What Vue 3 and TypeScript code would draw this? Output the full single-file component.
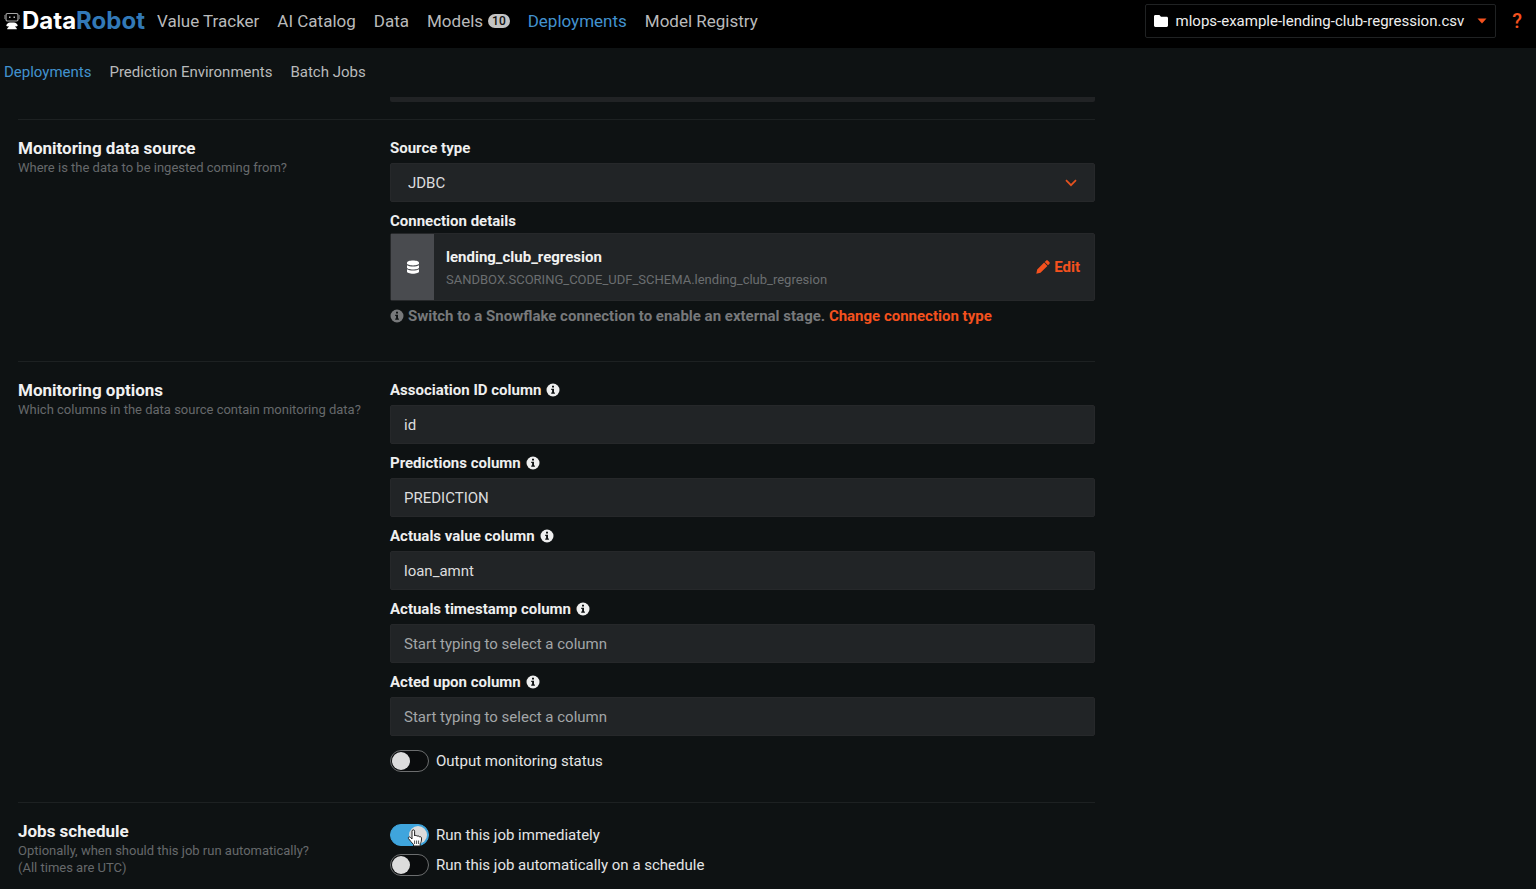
<script setup lang="ts">
import { ref, reactive } from 'vue'

interface NavItem {
  label: string
  active?: boolean
  badge?: number
}

interface ColumnField {
  id: string
  label: string
  value: string
}

const mainNav: NavItem[] = [
  { label: 'Value Tracker' },
  { label: 'AI Catalog' },
  { label: 'Data' },
  { label: 'Models', badge: 10 },
  { label: 'Deployments', active: true },
  { label: 'Model Registry' },
]

const subNav: NavItem[] = [
  { label: 'Deployments', active: true },
  { label: 'Prediction Environments' },
  { label: 'Batch Jobs' },
]

const sourceType = ref('JDBC')

const columns = reactive<ColumnField[]>([
  { id: 'association', label: 'Association ID column', value: 'id' },
  { id: 'predictions', label: 'Predictions column', value: 'PREDICTION' },
  { id: 'actuals', label: 'Actuals value column', value: 'loan_amnt' },
  { id: 'timestamp', label: 'Actuals timestamp column', value: '' },
  { id: 'acted', label: 'Acted upon column', value: '' },
])

const outputStatus = ref(false)
const runNow = ref(true)
const runScheduled = ref(false)
</script>

<template>
  <div class="app">
    <header class="topbar">
      <a class="brand" href="#">
        <svg class="brand-icon" viewBox="0 0 16 18" aria-hidden="true">
          <rect x="2" y="1.500" width="12" height="7.500" rx="1.500" fill="none" stroke="#a8a8a8" stroke-width="1.200" />
          <path d="M.8 3v4M15.200 3v4" stroke="#777" stroke-width="1" />
          <path d="M5 4.500h1.500V6H5zM9.500 4.500H11V6H9.500z" fill="#b8b8b8" />
          <path d="M6 10.500h4c1.800.2 3.400 1.400 3.800 3l-1 1-1.300-.5v1l1.300 1.500v.8H3.200v-.8L4.500 15v-1l-1.300.5-1-1c.4-1.600 2-2.800 3.800-3z" fill="#fff" />
        </svg>
        <span class="brand-name">Data<span class="brand-accent">Robot</span></span>
      </a>
      <nav class="main-nav" aria-label="Main">
        <a v-for="item in mainNav" :key="item.label" href="#" :class="{ active: item.active }">
          {{ item.label }}<span v-if="item.badge" class="badge">{{ item.badge }}</span>
        </a>
      </nav>
      <button class="project" type="button">
        <svg class="folder" viewBox="0 0 14 12" aria-hidden="true">
          <path d="M1.400 0h4l1.600 1.700h5.600c.8 0 1.400.6 1.400 1.400v7.500c0 .8-.6 1.400-1.400 1.400H1.400C.6 12 0 11.400 0 10.600V1.400C0 .6.6 0 1.400 0z" fill="#fff" />
        </svg>
        <span class="project-name">mlops-example-lending-club-regression.csv</span>
        <svg class="caret" viewBox="0 0 10 6" aria-hidden="true"><path d="M.5.500h9L5 5.500z" fill="#f4511e" /></svg>
      </button>
      <button class="help" type="button" aria-label="Help">?</button>
    </header>

    <nav class="sub-nav" aria-label="Deployments">
      <a v-for="item in subNav" :key="item.label" href="#" :class="{ active: item.active }">{{ item.label }}</a>
    </nav>

    <main class="content">
      <div class="scrolled-field"></div>

      <section class="section source">
        <div class="intro">
          <h2>Monitoring data source</h2>
          <p>Where is the data to be ingested coming from?</p>
        </div>
        <div class="body">
          <label class="label" for="source-type">Source type</label>
          <div class="select-wrap">
            <select id="source-type" v-model="sourceType" class="control select">
              <option>JDBC</option>
            </select>
            <svg class="chevron" viewBox="0 0 12 8" aria-hidden="true">
              <path d="M1 1.200l5 5 5-5" fill="none" stroke="#e5521f" stroke-width="1.700" />
            </svg>
          </div>
          <h3 class="label">Connection details</h3>
          <div class="connection">
            <div class="connection-icon">
              <svg viewBox="0 0 14 14" aria-hidden="true">
                <path d="M1 2.600C1 1.300 3.700.400 7 .400s6 .9 6 2.200v1C13 4.700 10.300 5.500 7 5.500S1 4.700 1 3.600z" fill="#fff" />
                <path d="M1 5.300c1.300.9 3.500 1.200 6 1.200s4.700-.3 6-1.200v2.200c0 1.200-2.700 2-6 2s-6-.8-6-2z" fill="#fff" />
                <path d="M1 9.300c1.300.9 3.500 1.200 6 1.200s4.700-.3 6-1.200v2.200c0 1.300-2.700 2.200-6 2.200s-6-.9-6-2.200z" fill="#fff" />
              </svg>
            </div>
            <div class="connection-text">
              <strong>lending_club_regresion</strong>
              <span>SANDBOX.SCORING_CODE_UDF_SCHEMA.lending_club_regresion</span>
            </div>
            <button class="edit" type="button">
              <svg viewBox="0 0 14 14" aria-hidden="true">
                <path d="M.3 13.700l.9-4.200 6.900-6.900 3.300 3.300-6.900 6.900zM8.700 2l1.300-1.300c.6-.6 1.400-.6 2 0l1.300 1.300c.6.6.6 1.400 0 2L12 5.300z" fill="#f4511e" />
              </svg>
              Edit
            </button>
          </div>
          <p class="hint">
            <svg class="info" viewBox="0 0 14 14" aria-hidden="true">
              <circle cx="7" cy="7" r="6.500" fill="currentColor" />
              <path d="M6 2.800h2v1.800H6zM5.200 5.700H8v3.800h.9v1.300H5.200V9.500h.9V7h-.9z" fill="#0e1213" />
            </svg>
            <span>Switch to a Snowflake connection to enable an external stage. <a href="#">Change connection type</a></span>
          </p>
        </div>
      </section>

      <section class="section options">
        <div class="intro">
          <h2>Monitoring options</h2>
          <p>Which columns in the data source contain monitoring data?</p>
        </div>
        <div class="body">
          <div v-for="field in columns" :key="field.id" class="field">
            <label class="label" :for="field.id">
              {{ field.label }}
              <svg class="info" viewBox="0 0 14 14" aria-hidden="true">
                <circle cx="7" cy="7" r="6.500" fill="currentColor" />
                <path d="M6 2.800h2v1.800H6zM5.200 5.700H8v3.800h.9v1.300H5.200V9.500h.9V7h-.9z" fill="#0e1213" />
              </svg>
            </label>
            <input :id="field.id" v-model="field.value" class="control" type="text" placeholder="Start typing to select a column" />
          </div>
          <label class="toggle">
            <input v-model="outputStatus" type="checkbox" />
            Output monitoring status
          </label>
        </div>
      </section>

      <section class="section schedule">
        <div class="intro">
          <h2>Jobs schedule</h2>
          <p>Optionally, when should this job run automatically?<br />(All times are UTC)</p>
        </div>
        <div class="body">
          <label class="toggle">
            <input v-model="runNow" type="checkbox" />
            Run this job immediately
            <svg class="pointer" viewBox="0 0 16 18" aria-hidden="true">
              <path d="M5 10V2.200C5 .3 7.600.3 7.600 2.200V7c.4-1 2.300-.8 2.400.3.600-.8 2.200-.5 2.300.6.800-.6 2.200-.1 2.200 1.200 0 3-.3 4-1.300 5.600V17H6.500v-1.500C4.500 13.500 3 11.500 1.500 9.600.7 8.300 2.300 7.300 3.400 8.400z" fill="#fff" stroke="#222" stroke-width="1" stroke-linejoin="round" />
              <path d="M7.600 11.500v3.500M9.600 11.500v3.500M11.600 11.500v3.500" stroke="#222" stroke-width=".8" />
            </svg>
          </label>
          <label class="toggle">
            <input v-model="runScheduled" type="checkbox" />
            Run this job automatically on a schedule
          </label>
        </div>
      </section>
    </main>
  </div>
</template>

<style>
body {
  margin: 0;
  background: #0e1213;
}
</style>

<style scoped>
.app {
  height: 100vh;
  display: flex;
  flex-direction: column;
  overflow: hidden;
  background: #0e1213;
  color: #e4e5e6;
  font: 15px/22px Roboto, "Liberation Sans", sans-serif;
}
.app * {
  box-sizing: border-box;
}
a {
  color: inherit;
  text-decoration: none;
}
button {
  margin: 0;
  border: 0;
  background: none;
  font: inherit;
  cursor: pointer;
}
svg {
  display: block;
  flex: none;
}
.topbar {
  flex: none;
  display: flex;
  align-items: center;
  height: 48px;
  padding: 0 12px 6px 4px;
  background: #000;
}
.brand {
  display: flex;
  align-items: center;
  gap: 2px;
  margin-right: 12px;
  color: #fff;
}
.brand-icon {
  width: 16px;
  height: 18px;
}
.brand-name {
  font: 700 24px/24px Inter, sans-serif;
}
.brand-accent {
  color: #3279b7;
}
.main-nav {
  display: flex;
  gap: 18px;
  margin-right: auto;
  color: #b9babb;
  font-size: 17px;
}
.main-nav a {
  display: flex;
  align-items: center;
}
.main-nav .active,
.sub-nav .active {
  color: #4292cf;
}
.badge {
  margin-left: 5px;
  padding: 0 4px;
  border-radius: 7px;
  background: #c4c4c4;
  color: #111;
  font-size: 12px;
  font-weight: 500;
  line-height: 14px;
}
.project {
  display: flex;
  align-items: center;
  height: 34px;
  padding: 0 8px;
  border: 1px solid #202223;
  border-radius: 2px;
  color: #eee;
}
.folder {
  width: 14px;
  height: 12px;
  margin-right: 8px;
}
.caret {
  width: 10px;
  height: 6px;
  margin-left: 13px;
}
.help {
  padding: 0;
  margin-left: 16px;
  margin-right: 2px;
  color: #f4511e;
  font-size: 20px;
  font-weight: 500;
}
.sub-nav {
  flex: none;
  display: flex;
  align-items: center;
  gap: 18px;
  height: 49px;
  padding: 0 4px 2px;
  color: #b9babb;
}
.content {
  flex: 1;
  min-height: 0;
  overflow: hidden;
  max-width: 1095px;
  padding-left: 18px;
}
.scrolled-field {
  height: 5px;
  margin: 0 0 17px 372px;
  border-radius: 0 0 2px 2px;
  background: #212325;
}
.section {
  display: grid;
  grid-template-columns: 372px minmax(0, 1fr);
  padding-top: 17px;
  border-top: 1px solid #1d2122;
}
.source {
  padding-bottom: 34px;
}
.options {
  padding-bottom: 30px;
}
h2 {
  margin: 0;
  color: #f1f1f1;
  font-size: 17px;
  font-weight: 700;
  line-height: 22px;
}
.intro p {
  margin: 0;
  color: #66696b;
  font-size: 13px;
  line-height: 17px;
}
.label {
  display: flex;
  align-items: center;
  gap: 5px;
  margin: 0 0 4px;
  color: #eeefef;
  font-size: 15px;
  font-weight: 700;
  line-height: 22px;
}
.info {
  width: 14px;
  height: 14px;
}
.control {
  display: block;
  width: 100%;
  height: 39px;
  margin: 0;
  padding: 0 13px;
  border: 1px solid #26282a;
  border-radius: 2px;
  outline: 0;
  background: #212426;
  color: #dcddde;
  font: inherit;
}
.control::placeholder {
  color: #a3a6a8;
  opacity: 1;
}
.select-wrap {
  position: relative;
  margin-bottom: 8px;
}
.select {
  appearance: none;
  padding: 0 17px;
}
.chevron {
  position: absolute;
  top: 16px;
  right: 18px;
  width: 12px;
  height: 8px;
  pointer-events: none;
}
h3.label {
  margin-bottom: 1px;
}
.connection {
  display: flex;
  align-items: center;
  height: 68px;
  border: 1px solid #26282a;
  border-radius: 2px;
  background: #212426;
}
.connection-icon {
  display: grid;
  place-items: center;
  align-self: stretch;
  width: 43px;
  margin-right: 12px;
  background: #494b4f;
}
.connection-icon svg,
.edit svg {
  width: 14px;
  height: 14px;
}
.connection-text {
  flex: 1;
  display: flex;
  flex-direction: column;
  gap: 1px;
  padding-top: 2px;
}
.connection-text strong {
  color: #f1f1f1;
  font-weight: 700;
}
.connection-text span {
  color: #6b6e70;
  font-size: 13px;
}
.edit {
  display: flex;
  align-items: center;
  gap: 4px;
  padding: 0 14px;
  color: #f4511e;
  font-weight: 700;
}
.hint {
  display: flex;
  align-items: center;
  gap: 4px;
  margin: 4px 0 0;
  color: #77797b;
  font-weight: 700;
}
.hint a {
  color: #f4511e;
}
.field {
  margin-bottom: 8px;
}
.options .toggle {
  margin-top: 14px;
}
.schedule .body {
  display: flex;
  flex-direction: column;
  gap: 8px;
  padding-top: 4px;
}
.toggle {
  position: relative;
  display: flex;
  align-items: center;
  gap: 7px;
  cursor: pointer;
}
.toggle input {
  appearance: none;
  display: flex;
  align-items: center;
  width: 39px;
  height: 22px;
  margin: 0;
  padding: 0 1px;
  border: 1px solid #6b6d6e;
  border-radius: 11px;
  background: #0a0c0d;
}
.toggle input::before {
  content: "";
  width: 18px;
  height: 18px;
  border-radius: 50%;
  background: #dcdcdc;
}
.toggle input:checked {
  justify-content: flex-end;
  border-color: #3fa5dd;
  background: #3fa5dd;
}
.pointer {
  position: absolute;
  top: 5px;
  left: 17px;
  width: 16px;
  height: 18px;
}
</style>
